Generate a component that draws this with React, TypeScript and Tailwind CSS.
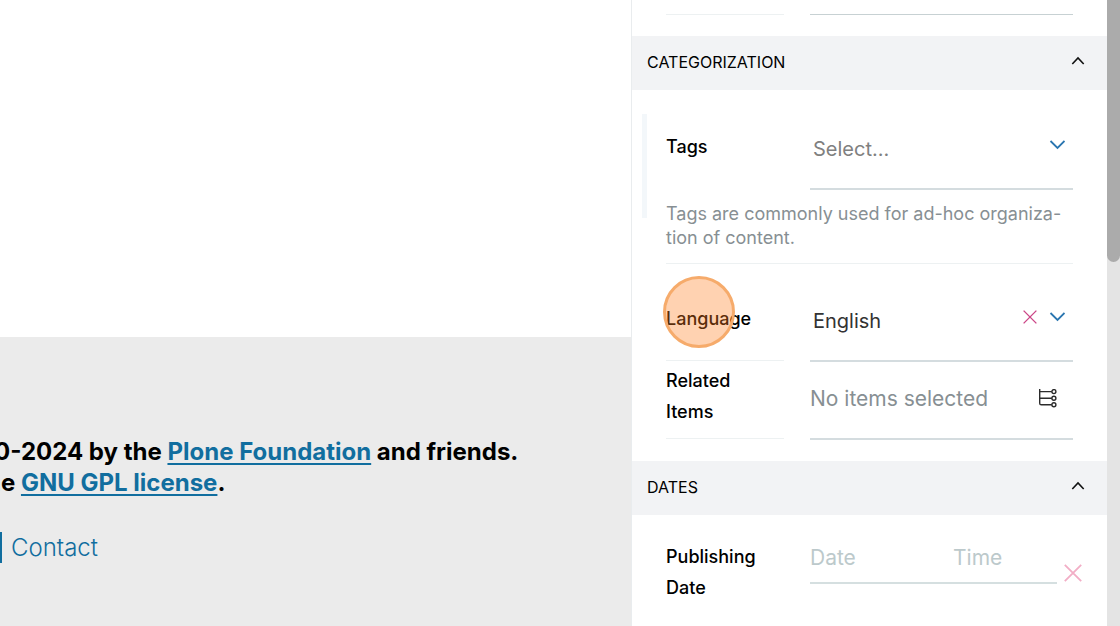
import type { ReactNode } from "react";

function ChevronUp() {
  return (
    <svg className="h-3 w-4" viewBox="0 0 16 12" fill="none" stroke="#111" strokeWidth="1.6">
      <path d="M2.300 8 8 2l5.700 6" />
    </svg>
  );
}

function ChevronDown() {
  return (
    <svg className="h-3 w-4" viewBox="0 0 16 12" fill="none" stroke="#2a76b0" strokeWidth="1.800">
      <path d="M1.500 2 8.500 9l7-7" />
    </svg>
  );
}

function Cross({ className }: { className: string }) {
  return (
    <svg className={className} viewBox="0 0 18 18" fill="none" stroke="currentColor" strokeWidth="1.800">
      <path d="m.8.8 16.400 16.400M17.200.8.8 17.200" />
    </svg>
  );
}

function TreeIcon() {
  return (
    <svg className="h-5 w-5" viewBox="0 1 20 20" fill="none" stroke="#2b2b2b" strokeWidth="1.400">
      <path d="M1.700 1v14.200c0 1 .6 1.600 1.600 1.600h10.500M1.700 3.600h12.100M1.700 10.200h12.100" />
      <circle cx="15.900" cy="3.600" r="2" />
      <circle cx="15.900" cy="10.200" r="2" />
      <circle cx="15.900" cy="16.800" r="2" />
    </svg>
  );
}

function SectionHeader({ title }: { title: string }) {
  return (
    <h2>
      <button
        type="button"
        aria-expanded="true"
        className="flex h-[54px] w-full items-center justify-between bg-[#f2f3f5] pr-[21px] pb-[2px] pl-[15px] text-base text-black"
      >
        <span>{title}</span>
        <ChevronUp />
      </button>
    </h2>
  );
}

function FieldRow({ children }: { children: ReactNode }) {
  return <div className="grid grid-cols-[118px_1fr] gap-x-[26px]">{children}</div>;
}

const labelText = "text-[18px] leading-[31px] font-medium text-black";

function Sidebar() {
  return (
    <aside className="w-[476px] shrink-0 border-l border-[#e9ecee] bg-white">
      <div className="h-[15px] px-[34px]">
        <FieldRow>
          <div className="h-[15px] border-b border-[#edf1f2]" />
          <div className="h-[15px] border-b border-[#c7d1d3]" />
        </FieldRow>
      </div>
      <div className="h-[21px]" />
      <SectionHeader title="CATEGORIZATION" />

      <div className="relative px-[34px] pt-[18px]">
        <div className="absolute top-6 left-[10px] h-[104px] w-[5px] bg-[#f3f7fa]" />
        <div className="border-b border-[#edf1f2] pb-[13px]">
          <FieldRow>
            <label htmlFor="tags" className={`pt-[23px] ${labelText}`}>
              Tags
            </label>
            <div className="relative">
              <select
                id="tags"
                className="block h-[82px] w-full appearance-none border-b-2 border-[#d4dcdf] bg-white pt-[2px] pl-[3px] text-xl text-[#808080]"
              >
                <option>Select...</option>
              </select>
              <span className="pointer-events-none absolute top-[31px] right-2">
                <ChevronDown />
              </span>
            </div>
          </FieldRow>
          <p className="mt-3 text-[18px] leading-6 whitespace-nowrap text-[#878f93]">
            Tags are commonly used for ad-hoc organiza-
            <br />
            tion of content.
          </p>
        </div>
      </div>

      <div className="px-[34px] pt-4">
        <FieldRow>
          <div className="relative mb-px border-b border-[#edf1f2] pt-[23px]">
            <label htmlFor="language" className={labelText}>
              Language
            </label>
            <span className="pointer-events-none absolute -top-1 -left-[3px] size-[72px] rounded-full border-[3px] border-[#f6ab6b] bg-[#ff7e1f]/35" />
          </div>
          <div className="relative">
            <select
              id="language"
              className="block h-[82px] w-full appearance-none border-b-2 border-[#d4dcdf] bg-white pt-[2px] pl-[3px] text-xl text-[#333]"
            >
              <option>English</option>
            </select>
            <span className="pointer-events-none absolute top-[31px] right-2">
              <ChevronDown />
            </span>
            <button type="button" aria-label="Clear language" className="absolute top-[30px] right-9 text-[#cc4788]">
              <Cross className="h-[14px] w-[14px]" />
            </button>
          </div>
        </FieldRow>
      </div>

      <div className="px-[34px] pb-[21px]">
        <FieldRow>
          <div className={`mb-px border-b border-[#edf1f2] pt-[3px] ${labelText}`}>
            Related
            <br />
            Items
          </div>
          <div className="flex h-[78px] items-center justify-between border-b-2 border-[#d4dcdf] pr-[15px] pb-[3px]">
            <span className="text-[21px] text-[#878f93]">No items selected</span>
            <button type="button" aria-label="Browse items">
              <TreeIcon />
            </button>
          </div>
        </FieldRow>
      </div>

      <SectionHeader title="DATES" />
      <div className="pt-[25px] pr-[25px] pb-6 pl-[34px]">
        <FieldRow>
          <label htmlFor="publish-date" className={`pt-px ${labelText}`}>
            Publishing Date
          </label>
          <div className="flex items-start">
            <div className="flex h-11 flex-1 border-b-2 border-[#d5dfe0]">
              <input
                id="publish-date"
                placeholder="Date"
                className="h-[34px] w-[143px] bg-transparent text-[21px] outline-none placeholder:text-[#bcc9cb]"
              />
              <input
                aria-label="Publishing time"
                placeholder="Time"
                className="h-[34px] w-0 flex-1 bg-transparent text-[21px] outline-none placeholder:text-[#bcc9cb]"
              />
            </div>
            <button type="button" aria-label="Clear date" className="mt-6 ml-[7px] text-[#f2aec6]">
              <Cross className="h-[18px] w-[18px]" />
            </button>
          </div>
        </FieldRow>
      </div>
    </aside>
  );
}

export default function App() {
  const link = "text-[#116e9f] underline decoration-2 underline-offset-[3px]";
  return (
    <div className="flex h-screen overflow-hidden bg-white font-['Inter',sans-serif]">
      <main className="flex min-w-0 flex-1 flex-col overflow-hidden">
        <div className="h-[337px] shrink-0" />
        <footer className="flex-1 bg-[#ebebeb] pt-[99px] text-2xl leading-[31px] whitespace-nowrap">
          <p className="-ml-[6px] font-bold text-black">
            0-2024 by the{" "}
            <a href="#foundation" className={link}>
              Plone Foundation
            </a>{" "}
            and friends.
          </p>
          <p className="-ml-[14px] font-bold text-black">
            he{" "}
            <a href="#license" className={link}>
              GNU GPL license
            </a>
            .
          </p>
          <p className="mt-[34px] font-light text-[#116e9f]">
            <a href="#contact" className="inline-block border-l-2 border-[#116e9f] pl-[9px]">
              Contact
            </a>
          </p>
        </footer>
      </main>
      <Sidebar />
      <div className="w-[13px] shrink-0 bg-[#e4e4e4]">
        <div className="h-[262px] rounded-b-full bg-[#ababab]" />
      </div>
    </div>
  );
}
